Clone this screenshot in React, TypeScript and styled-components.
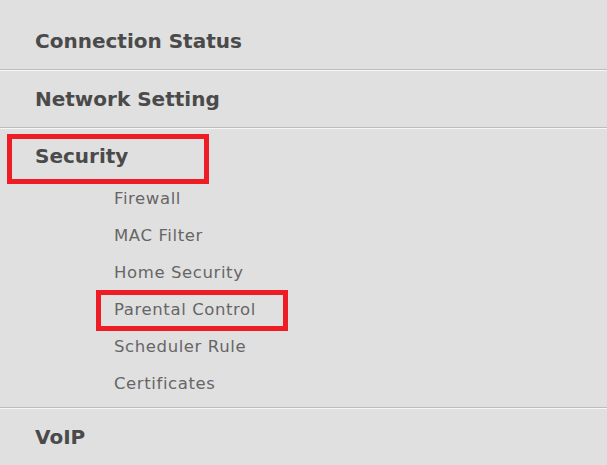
import React from "react";
import styled, { createGlobalStyle } from "styled-components";

const Global = createGlobalStyle`
  html, body { margin: 0; padding: 0; background: #e0e0e0; }
  body { font-family: "DejaVu Sans", "Liberation Sans", sans-serif; }
`;

const Menu = styled.nav`
  width: 607px;
  height: 465px;
  overflow: hidden;
  background: #e0e0e0;
  display: flex;
  flex-direction: column;
  padding-top: 13px;
  box-sizing: border-box;
`;

const Section = styled.section<{ $last?: boolean }>`
  display: flex;
  flex-direction: column;
  border-bottom: ${(p) => (p.$last ? "none" : "1px solid #bdbdbd")};
  box-shadow: ${(p) => (p.$last ? "none" : "0 1px 0 #f7f7f7")};
  margin-bottom: ${(p) => (p.$last ? "0" : "1px")};
`;

const Heading = styled.div<{ $open?: boolean }>`
  position: relative;
  height: ${(p) => (p.$open ? "51px" : "56px")};
  padding-top: ${(p) => (p.$open ? "3px" : "0")};
  box-sizing: border-box;
  display: flex;
  align-items: center;
  padding-left: 35px;
  font-size: 20px;
  font-weight: bold;
  color: #4a4a4a;
`;

const SubList = styled.ul`
  list-style: none;
  margin: 0;
  padding: 0 0 5px 0;
  display: flex;
  flex-direction: column;
`;

const SubItem = styled.li`
  position: relative;
  height: 37px;
  display: flex;
  align-items: center;
  padding-left: 114px;
  font-size: 16.5px;
  letter-spacing: 0.6px;
  color: #666666;
`;

const Highlight = styled.span<{ $l: number; $t: number; $w: number; $h: number }>`
  position: absolute;
  left: ${(p) => p.$l}px;
  top: ${(p) => p.$t}px;
  width: ${(p) => p.$w}px;
  height: ${(p) => p.$h}px;
  border: 5px solid #ee1c25;
  box-sizing: border-box;
  pointer-events: none;
`;

const subs = ["Firewall", "MAC Filter", "Home Security", "Parental Control", "Scheduler Rule", "Certificates"];

export default function App() {
  return (
    <>
      <Global />
      <Menu>
        <Section>
          <Heading>Connection Status</Heading>
        </Section>
        <Section>
          <Heading>Network Setting</Heading>
        </Section>
        <Section>
          <Heading $open>
            Security
            <Highlight $l={7} $t={5} $w={202} $h={50} />
          </Heading>
          <SubList>
            {subs.map((s) => (
              <SubItem key={s}>
                {s}
                {s === "Parental Control" && <Highlight $l={96} $t={-1} $w={192} $h={41} />}
              </SubItem>
            ))}
          </SubList>
        </Section>
        <Section $last>
          <Heading>VoIP</Heading>
        </Section>
      </Menu>
    </>
  );
}
